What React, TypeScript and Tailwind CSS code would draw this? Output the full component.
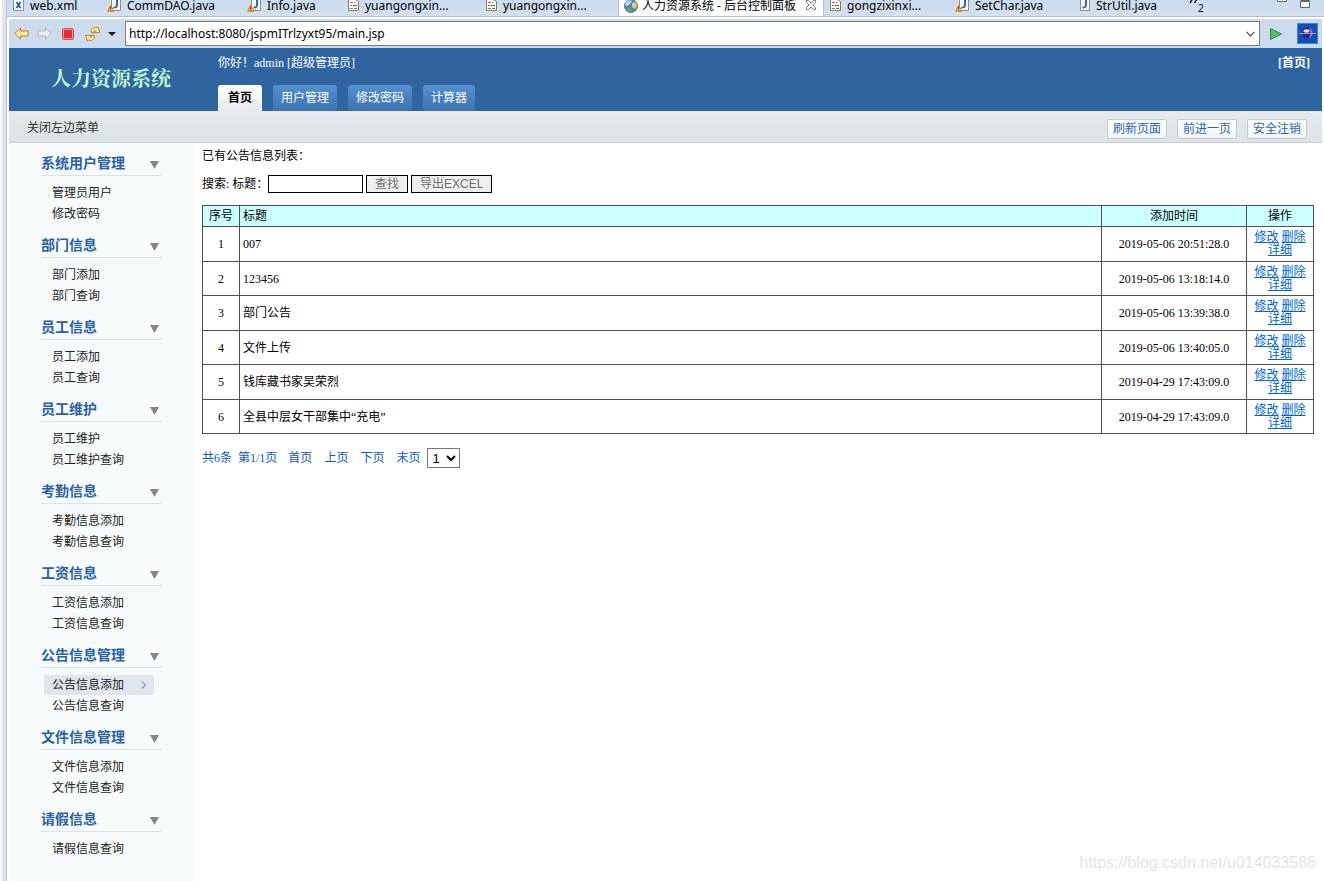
import React from 'react';
import clsx from 'clsx';

type FileKind = 'xml' | 'java' | 'javaWarn' | 'jsp' | 'web';

interface EditorTab {
  label: string;
  kind: FileKind;
  width: string;
  active?: boolean;
}

interface MenuGroup {
  title: string;
  items: string[];
}

interface Notice {
  title: string;
  time: string;
}

const editorTabs: EditorTab[] = [
  { label: 'web.xml', kind: 'xml', width: 'w-[95px]' },
  { label: 'CommDAO.java', kind: 'javaWarn', width: 'w-[140px]' },
  { label: 'Info.java', kind: 'javaWarn', width: 'w-[100px]' },
  { label: 'yuangongxin...', kind: 'jsp', width: 'w-[138px]' },
  { label: 'yuangongxin...', kind: 'jsp', width: 'w-[138px]' },
  { label: '人力资源系统 - 后台控制面板', kind: 'web', width: 'w-[206px]', active: true },
  { label: 'gongzixinxi...', kind: 'jsp', width: 'w-[126px]' },
  { label: 'SetChar.java', kind: 'javaWarn', width: 'w-[121px]' },
  { label: 'StrUtil.java', kind: 'java', width: 'w-[108px]' },
];

const menuGroups: MenuGroup[] = [
  { title: '系统用户管理', items: ['管理员用户', '修改密码'] },
  { title: '部门信息', items: ['部门添加', '部门查询'] },
  { title: '员工信息', items: ['员工添加', '员工查询'] },
  { title: '员工维护', items: ['员工维护', '员工维护查询'] },
  { title: '考勤信息', items: ['考勤信息添加', '考勤信息查询'] },
  { title: '工资信息', items: ['工资信息添加', '工资信息查询'] },
  { title: '公告信息管理', items: ['公告信息添加', '公告信息查询'] },
  { title: '文件信息管理', items: ['文件信息添加', '文件信息查询'] },
  { title: '请假信息', items: ['请假信息查询'] },
];

const notices: Notice[] = [
  { title: '007', time: '2019-05-06 20:51:28.0' },
  { title: '123456', time: '2019-05-06 13:18:14.0' },
  { title: '部门公告', time: '2019-05-06 13:39:38.0' },
  { title: '文件上传', time: '2019-05-06 13:40:05.0' },
  { title: '钱库藏书家吴荣烈', time: '2019-04-29 17:43:09.0' },
  { title: '全县中层女干部集中“充电”', time: '2019-04-29 17:43:09.0' },
];

const FileIcon: React.FC<{ kind: FileKind }> = ({ kind }) => {
  if (kind === 'web') {
    return (
      <svg className="h-[14px] w-[14px] shrink-0" viewBox="0 0 14 14">
        <circle cx="7" cy="7" r="6.5" fill="#4f86b5" stroke="#5b7186" />
        <path d="M2 3c2-2 5-2 6-1L6 5 3 7 1 6z" fill="#b9dbe6" />
        <path d="M8 4l4-1 1 4-2 3-3-2z" fill="#d9cf76" />
        <path d="M3 9l4 1 1 3-4-1z" fill="#86ac52" />
      </svg>
    );
  }
  if (kind === 'xml') {
    return (
      <svg className="h-[14px] w-[14px] shrink-0" viewBox="0 0 14 14">
        <path d="M1.5-.5h10v12h-10z" fill="#f4f8fc" stroke="#8b8e9a" />
        <path d="M4.5 3l4 6M8.500 3l-4 6" stroke="#285a8e" strokeWidth="1.7" />
      </svg>
    );
  }
  if (kind === 'jsp') {
    return (
      <svg className="h-[14px] w-[14px] shrink-0" viewBox="0 0 14 14">
        <path d="M1.5-.5h7l3 3v9h-10z" fill="#fbfcfd" stroke="#8d7b48" />
        <path d="M8.500-.5v3h3z" fill="#e9bb62" />
        <path d="M3 3.500h3M3 6.500h2" stroke="#d14d69" />
        <path d="M7 3.500h1M6 6.500h4" stroke="#3b62b5" />
        <path d="M3 9.500h3" stroke="#3fa267" />
        <path d="M7 9.500h3" stroke="#d14d69" />
      </svg>
    );
  }
  return (
    <svg className="h-[14px] w-4 shrink-0" viewBox="0 0 16 14">
      <path d="M4.500-.5h9v12h-9z" fill="#f4f8fc" stroke="#9a8e5c" />
      <path d="M10 1v5c0 2-1 2.600-3.500 2.500" fill="none" stroke="#2f6ca8" strokeWidth="2" />
      {kind === 'javaWarn' && (
        <>
          <path d="M3.700 6l3.200 6.300H.6z" fill="#f5b649" stroke="#c5812a" strokeLinejoin="round" />
          <path d="M3.700 7.800v2.200M3.700 10.700v1" stroke="#5b3a0a" />
        </>
      )}
    </svg>
  );
};

const EditorTabs: React.FC = () => (
  <div className="flex h-[17px] items-end overflow-hidden border-b border-[#b4bdd6] bg-gradient-to-b from-[#cbdcf0] to-[#d3e0ef] font-['Noto_Sans','Noto_Sans_CJK_SC',sans-serif] text-xs text-black">
    {editorTabs.map((tab, index) => (
      <div
        key={index}
        className={clsx(
          'flex h-7 shrink-0 items-end gap-1 whitespace-nowrap pb-[3px] pl-[5px]',
          tab.width,
          tab.active && 'border-x border-[#b4bdd6] bg-white',
        )}
      >
        <FileIcon kind={tab.kind} />
        <span className="leading-[14px]">{tab.label}</span>
        {tab.active && (
          <button type="button" aria-label="关闭" className="ml-auto mr-[6px]">
            <svg className="h-[14px] w-3" viewBox="0 0 12 14">
              <path
                d="M1.500 1.500h2L6 4l2.500-2.500h2v2L8 6l2.500 2.500v2h-2L6 8l-2.500 2.500h-2v-2L4 6 1.500 3.500z"
                fill="#fff"
                stroke="#777"
              />
            </svg>
          </button>
        )}
      </div>
    ))}
    <div className="flex h-7 items-end pl-[10px]">
      <svg className="mb-3 h-[7px] w-[9px]" viewBox="0 0 9 7">
        <path d="M0 0l3.500 2L1 6M4.500 0L8 2 5.500 6" fill="none" stroke="#000" strokeWidth="1.300" />
      </svg>
      <span className="text-[10px] leading-4">2</span>
    </div>
    <div className="ml-auto flex h-7 shrink-0 items-start gap-[11px] pr-[13px] pt-[5px]">
      <svg className="h-[11px] w-3" viewBox="0 0 12 11">
        <path d="M1.500 1.500h9v7h-9z" fill="#fff" stroke="#666" />
      </svg>
      <svg className="h-4 w-3" viewBox="0 0 12 16">
        <path d="M1.500.5h9v7h-9zM1.500 8.500h9v6h-9z" fill="#fff" stroke="#666" />
      </svg>
    </div>
  </div>
);

const BrowserBar: React.FC = () => (
  <div className="flex h-[29px] items-center bg-[#cddcec] pl-[5px] pr-1">
    <button type="button" aria-label="后退" className="mr-2">
      <svg className="h-4 w-[15px]" viewBox="0 0 15 16">
        <path d="M.8 7.500L6.500 2v3H14v5H6.500v3z" fill="#fff0a8" stroke="#b97a16" strokeLinejoin="round" />
      </svg>
    </button>
    <button type="button" aria-label="前进" className="mr-[10px]">
      <svg className="h-4 w-[15px]" viewBox="0 0 15 16">
        <path d="M14.200 7.500L8.500 2v3H1v5h7.500v3z" fill="#ececec" stroke="#b3b6ba" strokeLinejoin="round" />
      </svg>
    </button>
    <button type="button" aria-label="停止" className="mr-[11px]">
      <svg className="h-3 w-3" viewBox="0 0 12 12">
        <rect x=".5" y=".5" width="11" height="11" rx="1" fill="#ef8c8c" stroke="#c25763" />
        <rect x="2" y="2" width="8" height="8" fill="#e0303c" />
      </svg>
    </button>
    <button type="button" aria-label="刷新" className="mr-[7px]">
      <svg className="h-4 w-4" viewBox="0 0 16 16" fill="#fdeaa0" stroke="#bd8128" strokeLinejoin="round">
        <path d="M6 6C6 2.500 8.500.8 11.500 2L13 .8l1.800 5.700-5.800.2 1.500-2C9.700 4.200 8.800 4.800 8.500 7z" />
        <path d="M6 6C6 2.500 8.500.8 11.500 2L13 .8l1.800 5.700-5.800.2 1.500-2C9.700 4.200 8.800 4.800 8.500 7z" transform="rotate(180 7.700 8)" />
      </svg>
    </button>
    <button type="button" aria-label="更多" className="mr-[9px]">
      <svg className="h-1 w-2" viewBox="0 0 8 4">
        <path d="M0 0h8L4 4z" fill="#1c1c1c" />
      </svg>
    </button>
    <div className="flex h-[25px] flex-1 items-center border border-[#7a7a7a] bg-white pl-[3px] pr-1">
      <input
        type="text"
        aria-label="地址"
        defaultValue="http://localhost:8080/jspmITrlzyxt95/main.jsp"
        className="h-5 flex-1 font-['Noto_Sans',sans-serif] text-xs text-black outline-none"
      />
      <svg className="h-[6px] w-[9px]" viewBox="0 0 9 6">
        <path d="M.5.8l4 4 4-4" fill="none" stroke="#444" strokeWidth="1.200" />
      </svg>
    </div>
    <button type="button" aria-label="转到" className="ml-[9px]">
      <svg className="h-3 w-[14px]" viewBox="0 0 14 12">
        <path d="M1.500.5l11 5.500-11 5.500z" fill="#5cb96e" stroke="#2c8a48" strokeLinejoin="round" />
      </svg>
    </button>
    <svg className="ml-[14px] h-[21px] w-[21px]" viewBox="0 0 21 21">
      <rect x=".5" y=".5" width="20" height="20" fill="#1450b4" stroke="#3b86dc" />
      <circle cx="10.500" cy="10" r="5.500" fill="#38246f" />
      <path d="M12 4.800a5.500 5.500 0 0 1 0 10.400c2-3 2-7.400 0-10.400z" fill="#8f7fc8" />
      <ellipse cx="9.500" cy="8" rx="3" ry="1.700" fill="#e9def6" />
      <path d="M2 10.500h17" stroke="#a99be2" />
    </svg>
  </div>
);

const navTab = 'h-[26px] rounded-t-[3px] text-xs leading-6';

const PageHeader: React.FC = () => (
  <header className="flex h-[63px] bg-[#30649f] text-xs text-white">
    <div className="w-[209px] shrink-0 pl-[42px] pt-4">
      <h1 className="font-['Noto_Serif_CJK_SC','Noto_Sans_CJK_SC',serif] text-xl font-bold leading-7 text-[#c2f7d2]">
        人力资源系统
      </h1>
    </div>
    <div className="flex flex-1 flex-col justify-between">
      <div className="flex justify-between pr-3 pt-[6px] leading-[18px]">
        <span>你好！admin [超级管理员]</span>
        <a href="#home" className="font-bold">[首页]</a>
      </div>
      <nav className="flex gap-[11px]">
        <button type="button" className={clsx(navTab, 'bg-gradient-to-b from-white to-[#e6eaec] px-[10px] font-bold text-black')}>
          首页
        </button>
        {['用户管理', '修改密码', '计算器'].map((name) => (
          <button key={name} type="button" className={clsx(navTab, 'bg-gradient-to-b from-[#5590cf] to-[#3d72b0] px-2')}>
            {name}
          </button>
        ))}
      </nav>
    </div>
  </header>
);

const ActionBar: React.FC = () => (
  <div className="flex h-8 items-center justify-between border-b border-[#c3ced5] bg-gradient-to-b from-[#e6eaec] to-[#dde3e6] pl-[18px] pr-[15px] text-xs">
    <button type="button" className="pt-[2px] text-[#333]">关闭左边菜单</button>
    <div className="flex gap-[10px] pt-1">
      {['刷新页面', '前进一页', '安全注销'].map((name) => (
        <button
          key={name}
          type="button"
          className="h-5 rounded-[2px] border border-[#bccdd4] bg-gradient-to-b from-white to-[#f1f5f6] px-[5px] leading-4 text-[#2f65a3]"
        >
          {name}
        </button>
      ))}
    </div>
  </div>
);

const Sidebar: React.FC = () => (
  <aside className="w-[185px] shrink-0 bg-[#f7fbfc] px-8 pb-2 pt-2">
    {menuGroups.map((group) => (
      <section key={group.title} className="mb-[10px] w-[121px]">
        <h2 className="mb-[7px] flex h-6 items-center justify-between border-b border-[#d8e1e6] pr-[3px] text-sm font-bold text-[#2b5f9e]">
          {group.title}
          <svg className="mt-[3px] h-2 w-[9px]" viewBox="0 0 9 8">
            <path d="M0 0h9L4.500 8z" fill="#858585" />
          </svg>
        </h2>
        <ul className="flex flex-col gap-px pl-[3px] text-xs text-[#222]">
          {group.items.map((item) => {
            const selected = item === '公告信息添加';
            return (
              <li key={item}>
                <a
                  href="#menu"
                  className={clsx(
                    'flex h-5 w-[110px] items-center justify-between rounded-[2px] pl-2 pr-[7px]',
                    selected && 'bg-[#dfe6ee]',
                  )}
                >
                  {item}
                  {selected && (
                    <svg className="h-2 w-[6px]" viewBox="0 0 6 8">
                      <path d="M1 .5L4.500 4 1 7.500" fill="none" stroke="#94a8c6" strokeWidth="1.600" />
                    </svg>
                  )}
                </a>
              </li>
            );
          })}
        </ul>
      </section>
    ))}
  </aside>
);

const cell = 'border border-[#505050] p-0';
const formButton =
  "h-[18px] border border-black bg-[#efefef] px-2 font-['Liberation_Sans','Noto_Sans_CJK_SC',sans-serif] leading-4 text-[#6d6d6d]";

const NoticeList: React.FC = () => (
  <main className="flex-1 px-2 text-xs text-black">
    <p className="pt-[2px] leading-5">已有公告信息列表：</p>
    <form className="mt-[9px] flex h-[18px] items-center" onSubmit={(e) => e.preventDefault()}>
      <label htmlFor="title" className="w-[66px] whitespace-nowrap">搜索: 标题：</label>
      <input id="title" type="text" className="h-[18px] w-[95px] border border-black px-1" />
      <button type="submit" className={clsx(formButton, 'ml-[3px]')}>查找</button>
      <button type="button" className={clsx(formButton, 'ml-[3px]')}>导出EXCEL</button>
    </form>

    <table className="mt-3 w-full table-fixed border-collapse text-center">
      <colgroup>
        <col className="w-[37px]" />
        <col />
        <col className="w-[145px]" />
        <col className="w-[67px]" />
      </colgroup>
      <thead>
        <tr className="h-[21px] bg-[#ccffff]">
          <th className={clsx(cell, 'font-normal')}>序号</th>
          <th className={clsx(cell, 'pl-[3px] text-left font-normal')}>标题</th>
          <th className={clsx(cell, 'font-normal')}>添加时间</th>
          <th className={clsx(cell, 'font-normal')}>操作</th>
        </tr>
      </thead>
      <tbody>
        {notices.map((notice, index) => (
          <tr key={index} className="h-[35px] even:h-[34px]">
            <td className={cell}>{index + 1}</td>
            <td className={clsx(cell, 'pl-[3px] text-left')}>{notice.title}</td>
            <td className={cell}>{notice.time}</td>
            <td className={clsx(cell, 'leading-[13px] text-[#0066cc]')}>
              <a href="#edit" className="underline">修改</a>{' '}
              <a href="#delete" className="underline">删除</a>{' '}
              <a href="#detail" className="underline">详细</a>
            </td>
          </tr>
        ))}
      </tbody>
    </table>

    <div className="mt-[13px] flex h-[22px] items-center text-[#0f57b8]">
      <span className="mr-[6px]">共6条</span>
      <span className="mr-[11px]">第1/1页</span>
      <div className="flex gap-3">
        {['首页', '上页', '下页', '末页'].map((name) => (
          <a key={name} href="#page">{name}</a>
        ))}
      </div>
      <select
        aria-label="页码"
        className="ml-[7px] h-5 w-[33px] border border-[#767676] bg-white font-['Liberation_Sans',sans-serif] text-[13px] text-black"
      >
        <option>1</option>
      </select>
    </div>
  </main>
);

export default function App() {
  return (
    <div className="relative flex min-h-screen bg-white pl-[2px] font-['Liberation_Serif','Noto_Sans_CJK_SC',serif]">
      <div className="w-[5px] shrink-0 border-r border-[#bcc1cc] bg-[#dfe5f5]" />
      <div className="flex min-w-0 flex-1 flex-col">
        <EditorTabs />
        <div className="flex flex-1 flex-col px-[2px] pt-[2px]">
          <BrowserBar />
          <PageHeader />
          <ActionBar />
          <div className="flex flex-1 pt-px">
            <Sidebar />
            <NoticeList />
          </div>
        </div>
      </div>
      <span className="absolute bottom-2 right-2 font-['Liberation_Sans',sans-serif] text-base leading-5 text-[#e4e4e4]">
        https://blog.csdn.net/u014033586
      </span>
    </div>
  );
}
